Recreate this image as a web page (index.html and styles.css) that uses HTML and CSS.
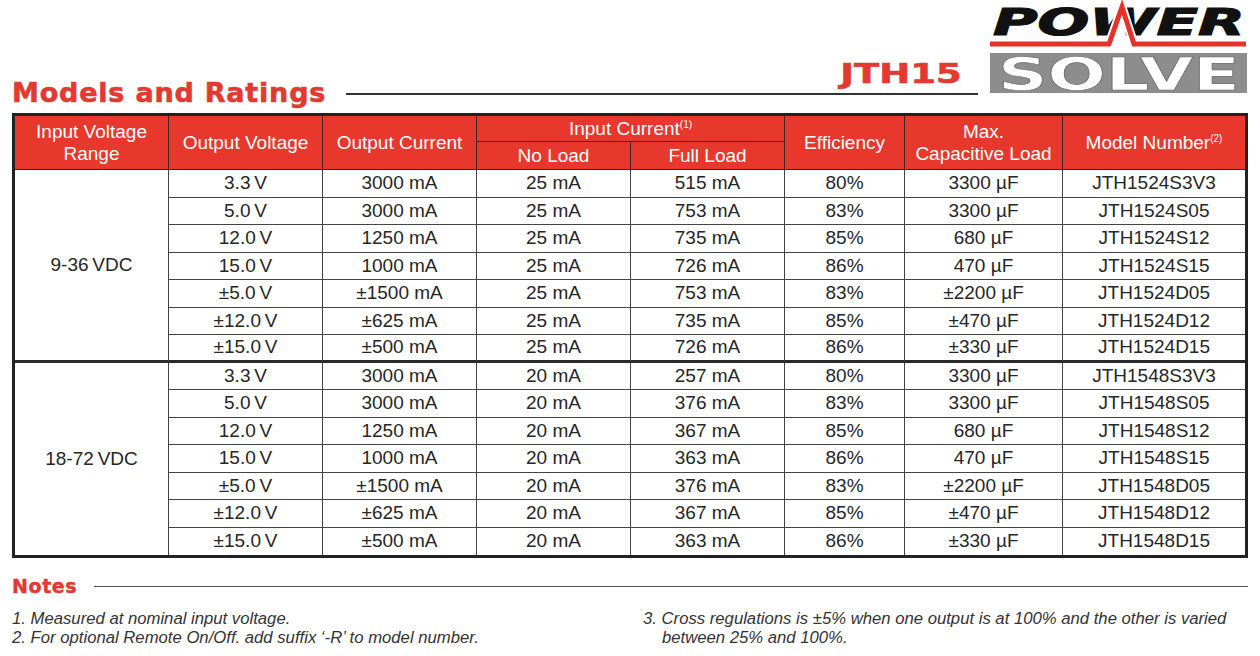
FILE: index.html
```html
<!DOCTYPE html>
<html lang="en">
<head>
<meta charset="utf-8">
<title>JTH15 Models and Ratings</title>
<link rel="stylesheet" href="styles.css">
</head>
<body>
<div class="page">
  <header class="head">
    <div class="head-left">
      <h1 class="title">Models and Ratings</h1>
      <div class="title-rule"><span class="model">JTH15</span></div>
    </div>
    <svg class="logo" width="260" height="100" viewBox="0 0 260 100">
      <text x="5" y="35" class="logo-power" textLength="252" lengthAdjust="spacingAndGlyphs">POWER</text>
      <polyline points="2,44 121,44 134,7 146,44 258,44" fill="none" stroke="#fff" stroke-width="9" stroke-linejoin="miter"/>
      <polyline points="2,44 121,44 134,7 146,44 258,44" fill="none" stroke="#e5332a" stroke-width="5" stroke-linejoin="miter"/>
      <rect x="2" y="53" width="257" height="40" fill="#8d8d8d"/>
      <text x="10" y="90" class="logo-solve" textLength="242" lengthAdjust="spacingAndGlyphs">SOLVE</text>
    </svg>
  </header>

  <table class="ratings">
    <colgroup>
      <col class="c154"><col class="c154"><col class="c154"><col class="c154"><col class="c154">
      <col class="c120"><col class="c158"><col class="c182">
    </colgroup>
    <thead>
      <tr class="hr1">
        <th rowspan="2">Input Voltage<br>Range</th>
        <th rowspan="2">Output Voltage</th>
        <th rowspan="2">Output Current</th>
        <th colspan="2">Input Current<sup class="fn">(1)</sup></th>
        <th rowspan="2">Efficiency</th>
        <th rowspan="2">Max.<br>Capacitive Load</th>
        <th rowspan="2" class="last">Model Number<sup class="fn">(2)</sup></th>
      </tr>
      <tr class="hr2">
        <th>No Load</th>
        <th>Full Load</th>
      </tr>
    </thead>
    <tbody>
      <tr><td rowspan="7" class="range gend-cell">9-36&#8239;VDC</td><td>3.3&#8239;V</td><td>3000 mA</td><td>25 mA</td><td>515 mA</td><td>80%</td><td>3300 µF</td><td class="last">JTH1524S3V3</td></tr>
      <tr><td>5.0&#8239;V</td><td>3000 mA</td><td>25 mA</td><td>753 mA</td><td>83%</td><td>3300 µF</td><td class="last">JTH1524S05</td></tr>
      <tr><td>12.0&#8239;V</td><td>1250 mA</td><td>25 mA</td><td>735 mA</td><td>85%</td><td>680 µF</td><td class="last">JTH1524S12</td></tr>
      <tr><td>15.0&#8239;V</td><td>1000 mA</td><td>25 mA</td><td>726 mA</td><td>86%</td><td>470 µF</td><td class="last">JTH1524S15</td></tr>
      <tr><td>±5.0&#8239;V</td><td>±1500 mA</td><td>25 mA</td><td>753 mA</td><td>83%</td><td>±2200 µF</td><td class="last">JTH1524D05</td></tr>
      <tr><td>±12.0&#8239;V</td><td>±625 mA</td><td>25 mA</td><td>735 mA</td><td>85%</td><td>±470 µF</td><td class="last">JTH1524D12</td></tr>
      <tr class="gend"><td>±15.0&#8239;V</td><td>±500 mA</td><td>25 mA</td><td>726 mA</td><td>86%</td><td>±330 µF</td><td class="last">JTH1524D15</td></tr>

      <tr><td rowspan="7" class="range end-cell">18-72&#8239;VDC</td><td>3.3&#8239;V</td><td>3000 mA</td><td>20 mA</td><td>257 mA</td><td>80%</td><td>3300 µF</td><td class="last">JTH1548S3V3</td></tr>
      <tr><td>5.0&#8239;V</td><td>3000 mA</td><td>20 mA</td><td>376 mA</td><td>83%</td><td>3300 µF</td><td class="last">JTH1548S05</td></tr>
      <tr><td>12.0&#8239;V</td><td>1250 mA</td><td>20 mA</td><td>367 mA</td><td>85%</td><td>680 µF</td><td class="last">JTH1548S12</td></tr>
      <tr><td>15.0&#8239;V</td><td>1000 mA</td><td>20 mA</td><td>363 mA</td><td>86%</td><td>470 µF</td><td class="last">JTH1548S15</td></tr>
      <tr><td>±5.0&#8239;V</td><td>±1500 mA</td><td>20 mA</td><td>376 mA</td><td>83%</td><td>±2200 µF</td><td class="last">JTH1548D05</td></tr>
      <tr><td>±12.0&#8239;V</td><td>±625 mA</td><td>20 mA</td><td>367 mA</td><td>85%</td><td>±470 µF</td><td class="last">JTH1548D12</td></tr>
      <tr class="tend"><td>±15.0&#8239;V</td><td>±500 mA</td><td>20 mA</td><td>363 mA</td><td>86%</td><td>±330 µF</td><td class="last">JTH1548D15</td></tr>
    </tbody>
  </table>

  <div class="notes-head">
    <h2 class="notes-title">Notes</h2>
    <div class="notes-rule"></div>
  </div>
  <div class="notes">
    <div class="notes-col">
      <p>1. Measured at nominal input voltage.</p>
      <p>2. For optional Remote On/Off. add suffix ‘-R’ to model number.</p>
    </div>
    <div class="notes-col">
      <p class="hang">3. Cross regulations is ±5% when one output is at 100% and the other is varied<br>between 25% and 100%.</p>
    </div>
  </div>
</div>
</body>
</html>
```

FILE: styles.css
```css
html, body {
  margin: 0;
  padding: 0;
  background: #ffffff;
}

body {
  font-family: "Liberation Sans", Arial, sans-serif;
  color: #222;
}

.page {
  width: 1236px;
  padding: 0 12px;
}

/* ---------- header ---------- */
.head {
  display: flex;
  height: 113px;
}

.head-left {
  flex: 1;
  display: flex;
  align-items: flex-end;
}

.title {
  margin: 0 0 7px 0;
  font-family: "DejaVu Sans", sans-serif;
  font-weight: bold;
  font-size: 27px;
  line-height: 27px;
  letter-spacing: 0.8px;
  color: #e23a30;
  -webkit-text-stroke: 0.6px #e23a30;
  white-space: nowrap;
}

.title-rule {
  flex: 1;
  margin: 0 0 18px 20px;
  padding: 0 16px 6px 0;
  border-bottom: 2px solid #333;
  display: flex;
  justify-content: flex-end;
}

.model {
  display: inline-block;
  font-family: "DejaVu Sans", sans-serif;
  font-weight: bold;
  font-size: 27px;
  line-height: 27px;
  color: #e23a30;
  -webkit-text-stroke: 0.6px #e23a30;
  transform: scaleX(1.37);
  transform-origin: right bottom;
}

.logo {
  flex: none;
  margin-left: 10px;
  display: block;
}

.logo-power {
  font-family: "DejaVu Sans", sans-serif;
  font-weight: bold;
  font-style: italic;
  font-size: 37px;
  fill: #111;
  stroke: #111;
  stroke-width: 1.2px;
}

.logo-solve {
  font-family: "DejaVu Sans", sans-serif;
  font-weight: bold;
  font-size: 44px;
  fill: #fff;
  stroke: #6a6a6a;
  stroke-width: 0.6px;
}

/* ---------- table ---------- */
.ratings {
  width: 1236px;
  box-sizing: border-box;
  border: 3px solid #222;
  border-collapse: separate;
  border-spacing: 0;
  table-layout: fixed;
  font-size: 19px;
}

.c154 { width: 154px; }
.c120 { width: 120px; }
.c158 { width: 158px; }
.c182 { width: 182px; }

.ratings th,
.ratings td {
  padding: 0;
  text-align: center;
  vertical-align: middle;
  border-right: 1px solid #444;
  border-bottom: 1px solid #444;
  white-space: nowrap;
}

.ratings th {
  background: #e8382d;
  color: #fff;
  font-weight: normal;
  line-height: 22px;
  border-color: #3c2422;
}

.ratings td {
  color: #262626;
  line-height: 22px;
}

.ratings .last {
  border-right: 0;
}

.hr1 { height: 26px; }
.hr2 { height: 28px; }
.ratings tbody tr { height: 27.5px; }

.ratings tr.gend td,
.ratings td.gend-cell {
  border-bottom: 3px solid #2a2a2a;
}

.ratings tr.tend td,
.ratings td.end-cell {
  border-bottom: 0;
}

.fn {
  font-size: 10px;
  line-height: 0;
  vertical-align: 7px;
}

/* ---------- notes ---------- */
.notes-head {
  display: flex;
  align-items: center;
  height: 22px;
  margin-top: 17px;
}

.notes-title {
  margin: 0;
  font-family: "DejaVu Sans", sans-serif;
  font-weight: bold;
  font-size: 19px;
  line-height: 22px;
  letter-spacing: 0.6px;
  color: #e23a30;
  -webkit-text-stroke: 0.4px #e23a30;
}

.notes-rule {
  flex: 1;
  margin-left: 17px;
  border-top: 1px solid #555;
}

.notes {
  display: grid;
  grid-template-columns: 631px 1fr;
  margin-top: 12px;
  font-style: italic;
  font-size: 16.7px;
  line-height: 19px;
  color: #333;
}

.notes p {
  margin: 0;
}

.hang {
  padding-left: 19px;
  text-indent: -19px;
}
```
